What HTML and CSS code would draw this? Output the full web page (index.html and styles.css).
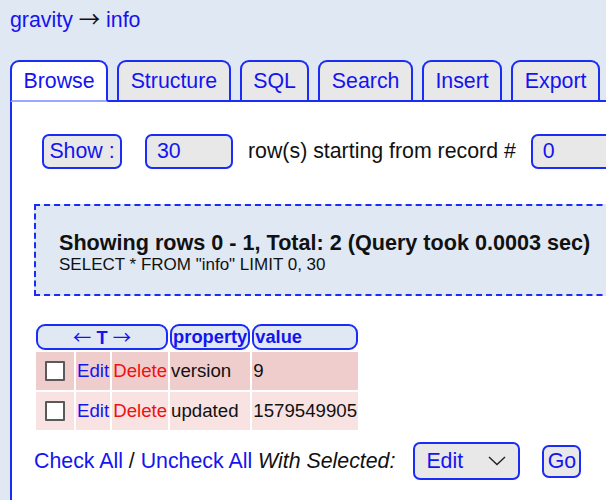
FILE: index.html
```html
<!DOCTYPE html>
<html lang="en">
<head>
    <meta charset="UTF-8">
    <title>gravity - info</title>
    <link rel="stylesheet" href="styles.css">
</head>
<body>

    <h1 class="crumbs"><a href="#">gravity</a> <span class="arr">&rarr;</span> <a href="#">info</a></h1>

    <!-- Tabs -->
    <div class="tabs">
        <a class="tab active" href="#">Browse</a>
        <a class="tab" href="#">Structure</a>
        <a class="tab" href="#">SQL</a>
        <a class="tab" href="#">Search</a>
        <a class="tab" href="#">Insert</a>
        <a class="tab" href="#">Export</a>
    </div>

    <div class="panel">
        <form class="show-row">
            <button type="button" class="btn">Show :</button>
            <span class="field">30</span>
            <span>row(s) starting from record #</span>
            <span class="field">0</span>
        </form>

        <div class="query-box">
            <div class="query-title">Showing rows 0 - 1, Total: 2 (Query took 0.0003 sec)</div>
            <div class="query-sql">SELECT * FROM "info" LIMIT 0, 30</div>
        </div>

        <table class="rows">
            <tr>
                <th colspan="3"><span class="arr">&larr;</span> T <span class="arr">&rarr;</span></th>
                <th>property</th>
                <th>value</th>
            </tr>
            <tr class="odd">
                <td class="chk"><span class="box"></span></td>
                <td><a href="#">Edit</a></td>
                <td><a class="del" href="#">Delete</a></td>
                <td>version</td>
                <td>9</td>
            </tr>
            <tr class="even">
                <td class="chk"><span class="box"></span></td>
                <td><a href="#">Edit</a></td>
                <td><a class="del" href="#">Delete</a></td>
                <td>updated</td>
                <td>1579549905</td>
            </tr>
        </table>

        <div class="actions">
            <span class="checks"><a href="#">Check All</a> / <a href="#">Uncheck All</a> <i>With Selected:</i></span>
            <span class="select">
                <span>Edit</span>
                <svg width="18" height="10" viewBox="0 0 18 10"><path d="M1 1 L9 8.5 L17 1" fill="none" stroke="#222" stroke-width="1.4"/></svg>
            </span>
            <button type="button" class="btn go">Go</button>
        </div>
    </div>

</body>
</html>
```

FILE: styles.css
```css
/* Page */
html {
    overflow: hidden;
}

body {
    margin: 0;
    background: #dfe8f3;
    font-family: 'Liberation Sans', Arial, sans-serif;
    font-size: 21.33px;
    color: #111;
}

a {
    color: #1414f0;
    text-decoration: none;
}

/* Long thin arrows */
.arr {
    font-family: 'Noto Sans CJK JP', 'DejaVu Sans', sans-serif;
    font-weight: normal;
    line-height: 1;
}

/* Breadcrumb title */
.crumbs {
    margin: 0;
    padding: 5px 10px 0;
    height: 30px;
    font-size: 21.33px;
    font-weight: normal;
    line-height: 30px;
}

/* Tabs */
.tabs {
    display: flex;
    gap: 9px;
    margin: 25px 0 0 10px;
    border-bottom: 2px solid #1a2cf5;
    width: 900px;
}

.tab {
    box-sizing: border-box;
    height: 40px;
    padding: 0 11.5px;
    line-height: 38px;
    background: #e8e8e8;
    border: 2px solid #1a2cf5;
    border-bottom: none;
    border-radius: 9px 9px 0 0;
}

.tab.active {
    height: 42px;
    margin-bottom: -2px;
    background: #fff;
    border-bottom: 2px solid #9aabff;
}

/* Content panel */
.panel {
    margin-left: 10px;
    width: 900px;
    min-height: 420px;
    background: #fff;
    border-left: 2px solid #1a2cf5;
    padding: 32px 0 0 22px;
}

/* Show rows form */
.show-row {
    display: flex;
    align-items: center;
    gap: 15px;
    margin: 0 0 0 8px;
}

.btn {
    box-sizing: border-box;
    height: 35px;
    padding: 0 5px;
    background: #e8e8e8;
    border: 2px solid #1a2cf5;
    border-radius: 7px;
    color: #1414f0;
    font-family: inherit;
    font-size: 21.33px;
}

.show-row .btn {
    width: 80px;
    margin-right: 8px;
}

.field {
    box-sizing: border-box;
    height: 35px;
    width: 88px;
    padding: 0 10px;
    line-height: 31px;
    background: #e8e8e8;
    border: 2px solid #1a2cf5;
    border-radius: 7px;
    color: #1414f0;
}

/* Query info box */
.query-box {
    margin-top: 35px;
    height: 92px;
    box-sizing: border-box;
    padding: 24px 23px 0;
    background: #dfe8f3;
    border: 2px dashed #1a2cf5;
}

.query-title {
    font-size: 21.6px;
    font-weight: bold;
    line-height: 25px;
}

.query-sql {
    font-size: 17px;
    line-height: 19px;
}

/* Result table */
.rows {
    margin-top: 26px;
    border-spacing: 2px;
    font-size: 18.67px;
}

.rows th {
    height: 22px;
    padding: 0 1px;
    background: #dfe8f3;
    border: 2px solid #1a2cf5;
    border-radius: 9px;
    color: #1414f0;
    font-size: 18.3px;
    text-align: left;
    line-height: 20px;
}

.rows th[colspan] {
    text-align: center;
}

.rows td {
    height: 38px;
    padding: 0 1px;
}

.rows tr.odd td {
    background: #f0cdcd;
}

.rows tr.even td {
    background: #f8e2e2;
}

.rows td.chk {
    width: 36px;
    text-align: center;
}

.box {
    display: inline-block;
    box-sizing: border-box;
    width: 20px;
    height: 20px;
    margin-top: 4px;
    background: #fff;
    border: 2px solid #5a5a5a;
    border-radius: 1px;
}

.rows a.del {
    color: #f01010;
}

/* Bottom actions */
.actions {
    display: flex;
    align-items: center;
    margin-top: 10px;
}

.select {
    box-sizing: border-box;
    display: flex;
    align-items: center;
    justify-content: space-between;
    width: 107px;
    height: 38px;
    margin-left: 18px;
    padding: 0 12px 0 11px;
    background: #e8e8e8;
    border: 2px solid #1a2cf5;
    border-radius: 7px;
    color: #1414f0;
}

.go {
    height: 33px;
    width: 39px;
    padding: 0;
    margin-left: 22px;
}
```
